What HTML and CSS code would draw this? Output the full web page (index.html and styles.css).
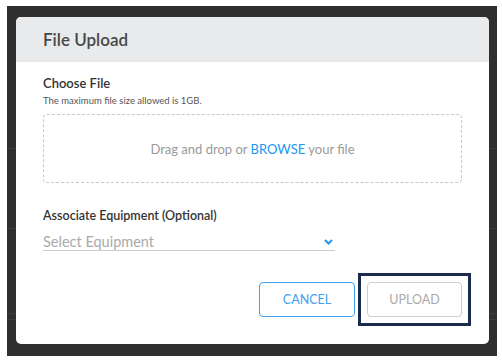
FILE: index.html
```html
<!DOCTYPE html>
<html lang="en">

<head>
    <meta charset="UTF-8">
    <meta name="viewport" content="width=device-width, initial-scale=1.0">
    <title>File Upload</title>
    <link rel="stylesheet" href="styles.css">
</head>

<body>
    <div class="overlay">
        <div class="modal">
            <div class="modal-header">
                <h2>File Upload</h2>
            </div>

            <div class="modal-body">
                <div class="field-label">Choose File</div>
                <p class="hint">The maximum file size allowed is 1GB.</p>

                <div class="dropzone">
                    <span>Drag and drop or <a href="#" class="browse">BROWSE</a> your file</span>
                </div>

                <div class="field-label equipment-label">Associate Equipment (Optional)</div>
                <div class="select">
                    <span>Select Equipment</span>
                    <svg class="chevron" width="9" height="6" viewBox="0 0 9 6">
                        <path d="M1 1 L4.5 4.5 L8 1" fill="none" stroke="#2196f3" stroke-width="2" />
                    </svg>
                </div>

                <div class="actions">
                    <button type="button" class="btn btn-cancel">CANCEL</button>
                    <!-- focus ring around the upload button -->
                    <div class="focus-ring">
                        <button type="button" class="btn btn-upload" disabled>UPLOAD</button>
                    </div>
                </div>
            </div>
        </div>
    </div>
</body>

</html>
```

FILE: styles.css
```css
body {
    margin: 0;
    padding: 0;
    background: #fff;
    font-family: 'Lato', 'Liberation Sans', sans-serif;
}

/* dark backdrop, with the page behind showing faint lines */
.overlay {
    margin: 6px 5px 0 7px;
    height: 350px;
    box-sizing: border-box;
    padding: 11px 8px 0 9px;
    background:
        linear-gradient(#3c3c3c, #3c3c3c) 0 142px / 100% 1px no-repeat,
        linear-gradient(#3c3c3c, #3c3c3c) 0 222px / 100% 1px no-repeat,
        linear-gradient(#3c3c3c, #3c3c3c) 0 307px / 100% 1px no-repeat,
        linear-gradient(#3c3c3c, #3c3c3c) 0 313px / 100% 1px no-repeat,
        #2f2f2f;
}

.modal {
    width: 473px;
    height: 327px;
    background: #fff;
    border-radius: 5px;
    overflow: hidden;
}

.modal-header {
    height: 45px;
    background: #e9eaeb;
    padding: 0 27px;
    display: flex;
    align-items: center;
}

.modal-header h2 {
    margin: 0;
    font-size: 17px;
    font-weight: 600;
    color: #484848;
}

.modal-body {
    padding: 13px 27px 0;
}

.field-label {
    font-size: 13px;
    font-weight: 600;
    color: #333;
}

.hint {
    margin: 4px 0 0;
    font-size: 9.5px;
    color: #555;
}

.dropzone {
    margin-top: 8px;
    height: 69px;
    box-sizing: border-box;
    border: 1px dashed #c8c8c8;
    border-radius: 4px;
    display: flex;
    align-items: center;
    justify-content: center;
    font-size: 13px;
    color: #9a9a9a;
}

.browse {
    color: #2196f3;
    text-decoration: none;
}

.equipment-label {
    margin-top: 25px;
    font-size: 12.5px;
}

.select {
    margin-top: 10px;
    width: 292px;
    height: 17px;
    border-bottom: 1px solid #ccc;
    display: flex;
    align-items: center;
    justify-content: space-between;
    font-size: 14.5px;
    color: #aaa;
}

.chevron {
    margin-right: 2px;
}

.actions {
    margin-top: 22px;
    display: flex;
    justify-content: flex-end;
    align-items: center;
    gap: 3px;
    margin-right: -9px;
}

.focus-ring {
    border: 3px solid #1b2b4b;
    padding: 6px;
    display: flex;
}

.btn {
    width: 95px;
    height: 35px;
    background: #fff;
    border-radius: 4px;
    font-family: 'Lato', 'Liberation Sans', sans-serif;
    font-size: 12.5px;
    cursor: pointer;
}

.btn-cancel {
    width: 96px;
    border: 1px solid #3ea2f5;
    color: #3ea2f5;
}

.btn-upload {
    border: 1px solid #cfcfcf;
    color: #aaa;
}
```
